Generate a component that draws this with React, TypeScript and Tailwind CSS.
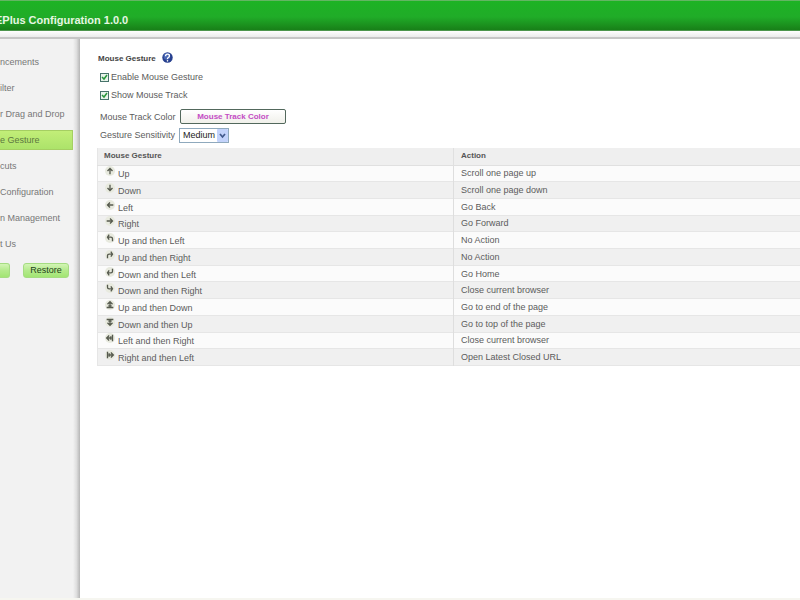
import { ReactNode } from 'react';

const UP = 'M5 9V2M2 5l3-3 3 3';
const DOWN = 'M5 1v7M2 5l3 3 3-3';
const LEFT = 'M9 5H2M5 2L2 5l3 3';
const RIGHT = 'M1 5h7M5 2l3 3-3 3';
const UP_LEFT = 'M8 9V6Q8 4 6 4H2M4 1L2 4l2 3';
const UP_RIGHT = 'M2 9V6Q2 4 4 4h4M6 1l2 3-2 3';
const DOWN_LEFT = 'M8 1v3Q8 6 6 6H2M4 3L2 6l2 3';
const DOWN_RIGHT = 'M2 1v3Q2 6 4 6h4M6 3l2 3-2 3';
const UP_DOWN = 'M5 7V1M2 4l3-3 3 3M1 8h8M3 6h4';
const DOWN_UP = 'M5 3v6M2 6l3 3 3-3M1 2h8M3 4h4';
const LEFT_RIGHT = 'M7 5H1M4 2L1 5l3 3M8 1v8M6 3v4';
const RIGHT_LEFT = 'M3 5h6M6 2l3 3-3 3M2 1v8M4 3v4';

const gestures = [
  { icon: UP, name: 'Up', action: 'Scroll one page up' },
  { icon: DOWN, name: 'Down', action: 'Scroll one page down' },
  { icon: LEFT, name: 'Left', action: 'Go Back' },
  { icon: RIGHT, name: 'Right', action: 'Go Forward' },
  { icon: UP_LEFT, name: 'Up and then Left', action: 'No Action' },
  { icon: UP_RIGHT, name: 'Up and then Right', action: 'No Action' },
  { icon: DOWN_LEFT, name: 'Down and then Left', action: 'Go Home' },
  { icon: DOWN_RIGHT, name: 'Down and then Right', action: 'Close current browser' },
  { icon: UP_DOWN, name: 'Up and then Down', action: 'Go to end of the page' },
  { icon: DOWN_UP, name: 'Down and then Up', action: 'Go to top of the page' },
  { icon: LEFT_RIGHT, name: 'Left and then Right', action: 'Close current browser' },
  { icon: RIGHT_LEFT, name: 'Right and then Left', action: 'Open Latest Closed URL' },
];

const navItems = [
  'ncements',
  'ilter',
  'r Drag and Drop',
  'e Gesture',
  'cuts',
  'Configuration',
  'n Management',
  't Us',
];

function GestureIcon({ path }: { path: string }) {
  return (
    <svg viewBox="-1 -1 12 12" className="size-[10px] shrink-0" aria-hidden="true">
      <circle cx="5" cy="5" r="6" fill="#e8eadf" />
      <path d={path} fill="none" stroke="#565a4e" strokeWidth="1.6" />
    </svg>
  );
}

function HelpIcon() {
  return (
    <svg viewBox="0 0 20 20" className="size-[11px]" aria-hidden="true">
      <circle cx="10" cy="10" r="9.5" fill="#27408f" />
      <circle cx="9" cy="8" r="6" fill="#4866b4" />
      <path d="M6.5 7.5Q6.5 4 10 4t3.5 3.2Q13.5 9 11.5 10T10 13" fill="none" stroke="#fff" strokeWidth="2.4" />
      <circle cx="10" cy="16" r="1.5" fill="#fff" />
    </svg>
  );
}

function Checkbox({ id, children }: { id: string; children: ReactNode }) {
  return (
    <div className="flex h-[18px] items-center gap-[2px] pl-[3px]">
      <span className="relative flex size-[9px]">
        <input
          id={id}
          type="checkbox"
          defaultChecked
          className="peer size-[9px] appearance-none border border-[#47736b] bg-[#e8f3ea]"
        />
        <svg
          viewBox="0 0 9 9"
          className="pointer-events-none absolute inset-0 hidden peer-checked:block"
          aria-hidden="true"
        >
          <path d="M2 4l2 2 3-4" fill="none" stroke="#27963a" strokeWidth="1.5" />
        </svg>
      </span>
      <label htmlFor={id}>{children}</label>
    </div>
  );
}

const greenButton =
  'h-[15px] rounded-[3px] border border-[#a5dc82] bg-linear-to-b from-[#d3f5b5] via-[#b4ea8c] to-[#a2e573] text-[9px] leading-[13px] text-[#24421a]';

export default function App() {
  return (
    <div className="flex min-h-screen flex-col overflow-hidden bg-white font-['Liberation_Sans',Arial,sans-serif] text-[9px] leading-[12px] text-[#5c5c5c]">
      <header className="flex h-[31px] items-center overflow-hidden border-t border-b border-t-[#63b563] border-b-[#4d954d] bg-linear-to-b from-[#1db324] from-0% via-[#20ac28] via-55% to-[#188018] pt-[9px]">
        <h1 className="-ml-[5px] text-[11px] leading-[14px] font-bold whitespace-nowrap text-[#e6f7e2]">
          EPlus Configuration 1.0.0
        </h1>
      </header>
      <div className="h-2 border-b-2 border-[#c6c6c6] bg-linear-to-b from-white to-[#ebebeb]" />

      <div className="flex grow border-b-2 border-[#f6f6f0]">
        <aside className="flex w-20 shrink-0 bg-[#f2f2f2]">
          <div className="w-[73px] pt-[13px]">
            <nav className="flex flex-col gap-[6px]">
              {navItems.map((item) => (
                <a
                  key={item}
                  href="#"
                  aria-current={item === 'e Gesture' ? 'page' : undefined}
                  className="block h-5 border border-l-0 border-transparent leading-[18px] whitespace-nowrap text-[#777] aria-[current=page]:border-[#a5cf62] aria-[current=page]:bg-linear-to-b aria-[current=page]:from-[#c2ee78] aria-[current=page]:to-[#ace36a] aria-[current=page]:text-[#5d7740]"
                >
                  {item}
                </a>
              ))}
            </nav>
            <div className="mt-[9px] flex justify-between pr-1">
              <button type="button" aria-label="Save" className={`${greenButton} w-[10px] rounded-l-none border-l-0`} />
              <button type="button" className={`${greenButton} w-[46px]`}>
                Restore
              </button>
            </div>
          </div>
          <div className="grow bg-linear-to-r from-[#f2f2f2] via-[#dedede] to-[#b6b6b6]" />
        </aside>

        <main className="min-w-0 grow pt-[11px] pl-[17px]">
          <h2 className="flex h-[18px] items-center gap-[6px] pl-px text-[8px] font-bold text-[#444]">
            Mouse Gesture
            <a href="#" aria-label="Help" className="mb-1">
              <HelpIcon />
            </a>
          </h2>
          <Checkbox id="enable">Enable Mouse Gesture</Checkbox>
          <Checkbox id="track">Show Mouse Track</Checkbox>

          <div className="mt-[3px] flex h-[19px] items-center pl-[3px]">
            <span className="w-20">Mouse Track Color</span>
            <button
              type="button"
              className="h-[15px] w-[106px] rounded-[2px] border border-[#52685c] bg-linear-to-b from-white to-[#f0f0ea] text-[8px] leading-[13px] font-bold text-[#c44cc4]"
            >
              Mouse Track Color
            </button>
          </div>
          <div className="flex h-[18px] items-center pl-[3px]">
            <label htmlFor="sensitivity" className="w-[79px]">
              Gesture Sensitivity
            </label>
            <span className="relative">
              <select
                id="sensitivity"
                defaultValue="Medium"
                className="block h-[15px] w-[50px] appearance-none border border-[#8fa9bd] bg-white pl-[3px] text-[9px] leading-[13px] text-[#222]"
              >
                <option>Low</option>
                <option>Medium</option>
                <option>High</option>
              </select>
              <svg
                viewBox="0 0 11 13"
                className="pointer-events-none absolute top-px right-px h-[13px] w-[11px]"
                aria-hidden="true"
              >
                <rect width="11" height="13" rx="1" fill="#c3d3fb" />
                <path d="M3 5l2.5 3L8 5" fill="none" stroke="#41598c" strokeWidth="1.7" />
              </svg>
            </span>
          </div>

          <table className="mt-1 h-[218px] w-full table-fixed border-collapse border-l border-[#e6e6e6] text-left">
            <thead>
              <tr className="h-[17px] bg-[#efefef] text-[8px] text-[#555]">
                <th scope="col" className="w-[356px] border-r border-b border-[#e0e0e0] py-0 pl-[6px]">
                  Mouse Gesture
                </th>
                <th scope="col" className="border-b border-[#e0e0e0] py-0 pl-[7px]">
                  Action
                </th>
              </tr>
            </thead>
            <tbody>
              {gestures.map((g) => (
                <tr key={g.name} className="border-b border-[#e6e6e6] odd:bg-[#fbfbfb] even:bg-[#f0f0f0]">
                  <td className="border-r border-[#dedede] py-0 pl-[7px]">
                    <span className="flex items-start gap-[3px]">
                      <GestureIcon path={g.icon} />
                      <span className="pt-[2px]">{g.name}</span>
                    </span>
                  </td>
                  <td className="py-0 pl-[7px]">{g.action}</td>
                </tr>
              ))}
            </tbody>
          </table>
        </main>
      </div>
    </div>
  );
}
